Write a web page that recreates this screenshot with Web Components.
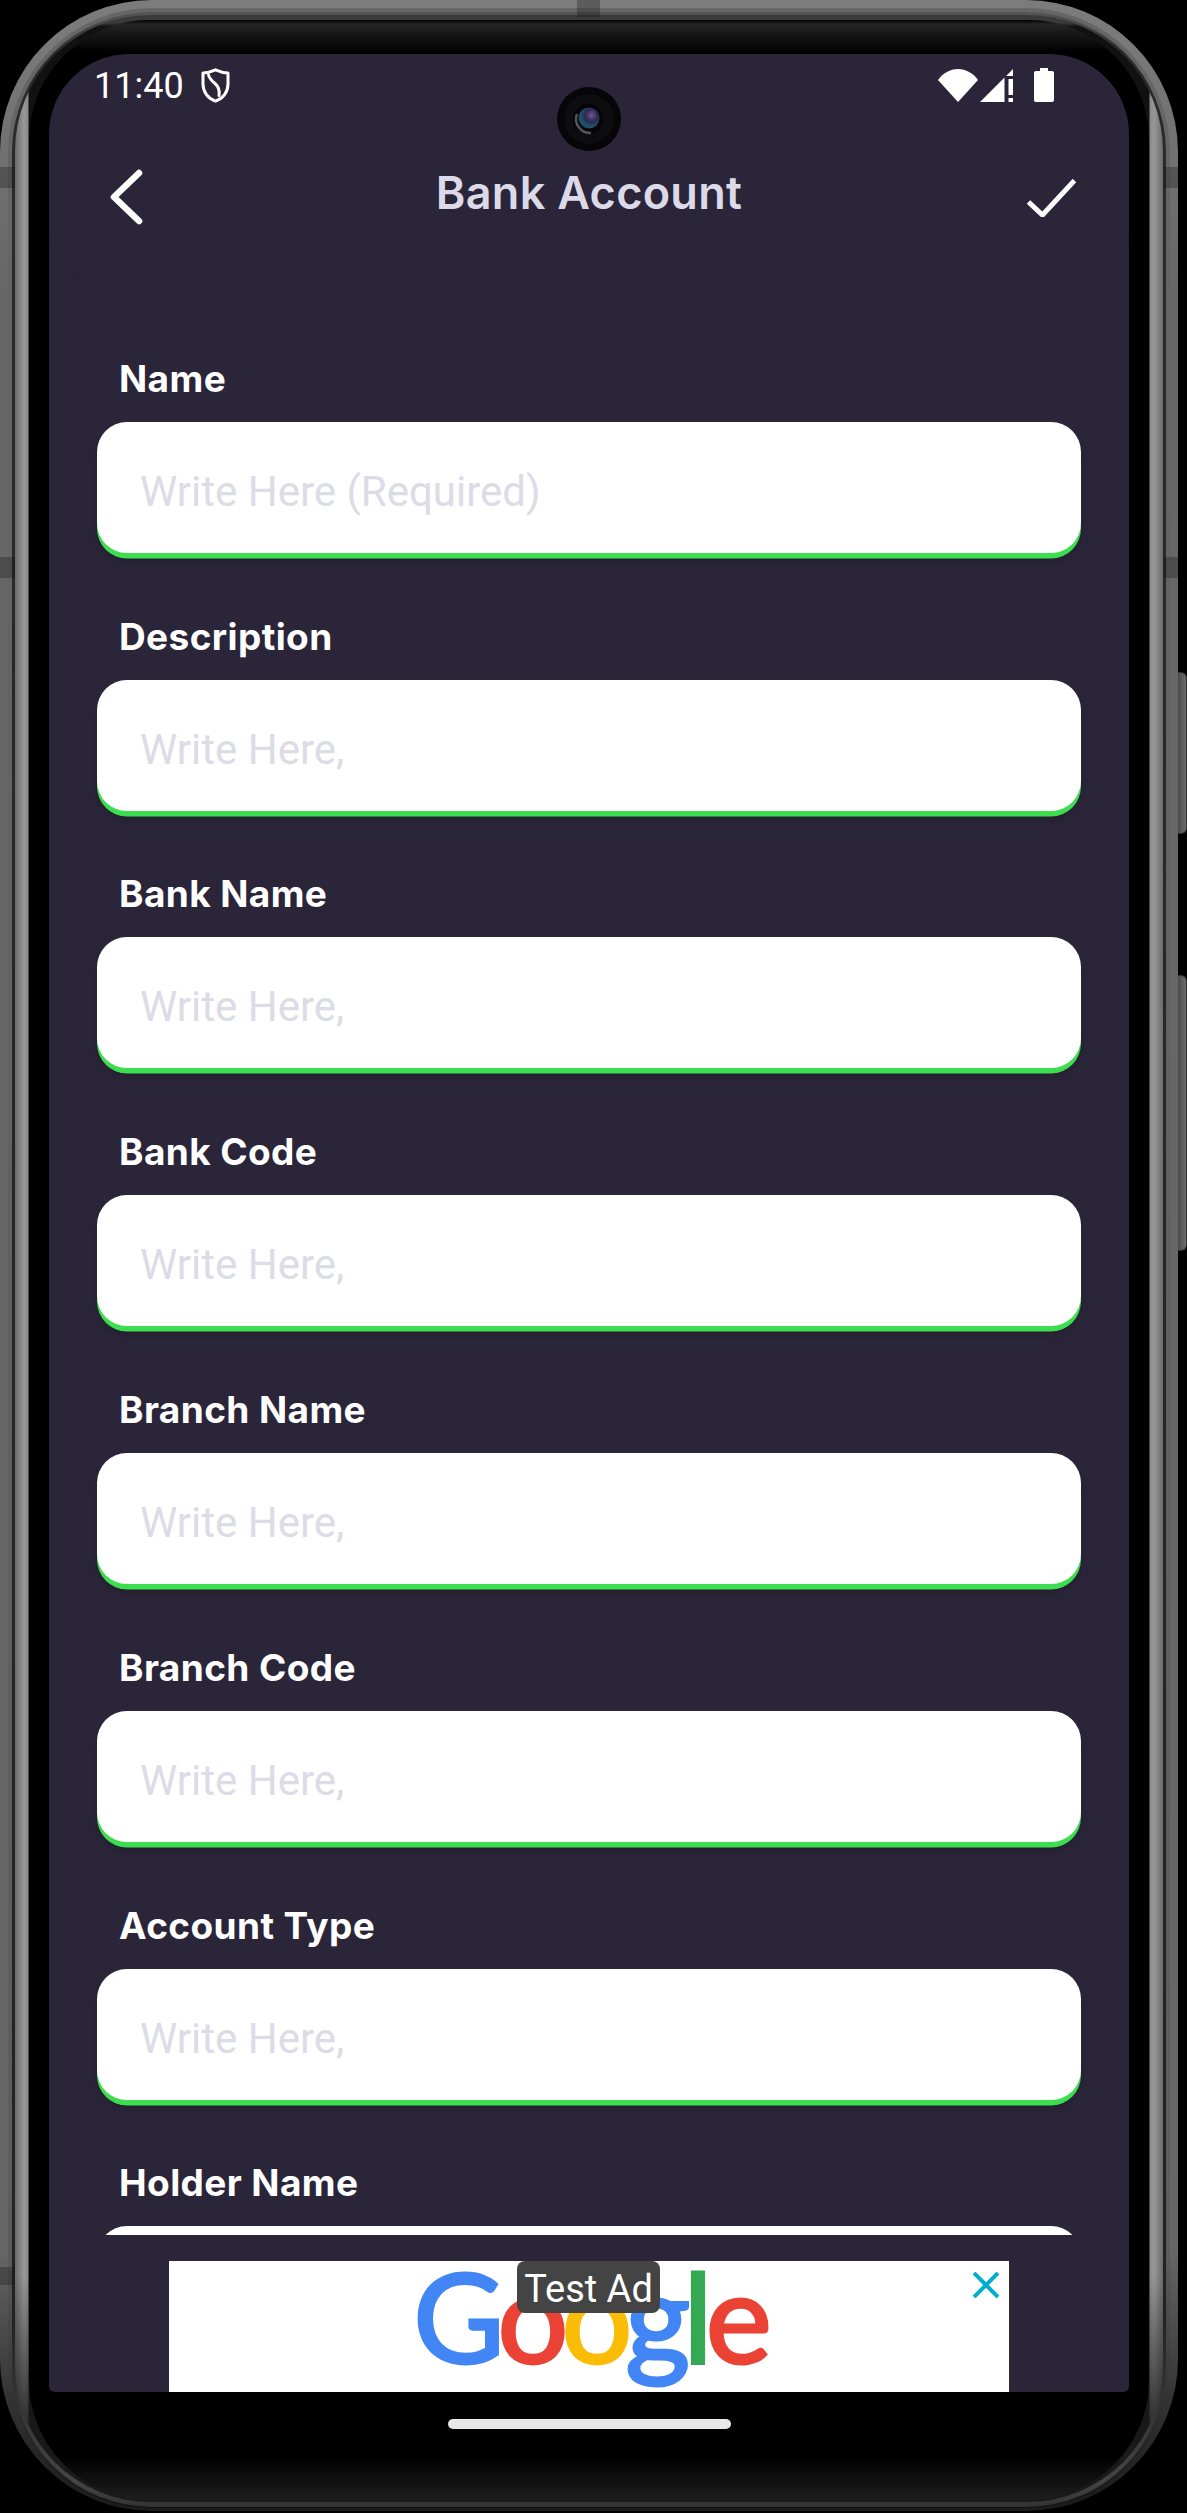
<!DOCTYPE html>
<html>
<head>
<meta charset="utf-8">
<title>Bank Account</title>
<style>
	html, body { margin: 0; background: #000; }
	body { width: 1187px; height: 2513px; overflow: hidden; font-family: Roboto, sans-serif; }
</style>
</head>
<body>
<phone-frame>
	<status-bar></status-bar>
	<app-header>Bank Account</app-header>
	<bank-form>
		<form-field><span slot="label">Name</span><span slot="hint">Write Here (Required)</span></form-field>
		<form-field><span slot="label">Description</span><span slot="hint">Write Here,</span></form-field>
		<form-field><span slot="label">Bank Name</span><span slot="hint">Write Here,</span></form-field>
		<form-field><span slot="label">Bank Code</span><span slot="hint">Write Here,</span></form-field>
		<form-field><span slot="label">Branch Name</span><span slot="hint">Write Here,</span></form-field>
		<form-field><span slot="label">Branch Code</span><span slot="hint">Write Here,</span></form-field>
		<form-field><span slot="label">Account Type</span><span slot="hint">Write Here,</span></form-field>
		<form-field><span slot="label">Holder Name</span></form-field>
	</bank-form>
	<test-ad></test-ad>
</phone-frame>

<script>
/*
Device body: metal rim, bezel and screen
*/
const templatePhone = document.createElement('template');
templatePhone.innerHTML = `
	<style>
		:host {
			display: block;
			position: relative;
			width: 1187px;
			height: 2511px;
		}
		.rim-outer {
			width: 1178px;
			height: 2511px;
			box-sizing: border-box;
			padding: 8px 8px 3px;
			border-radius: 152px;
			background: linear-gradient(#7c7c7c 0, #666 300px, #666 2250px, #333 2400px, #1c1c1c 2500px);
		}
		.rim-line {
			height: 100%;
			box-sizing: border-box;
			padding: 4px 4px 1px;
			border-radius: 144px;
			background: linear-gradient(#666, #5c5c5c 2250px, #2a2a2a 2420px, #111);
		}
		.rim-dark {
			height: 100%;
			box-sizing: border-box;
			padding: 3px 3px 5px;
			border-radius: 140px;
			background: linear-gradient(#555, #2a2a2a 40px, #222 2300px, #444 2470px, #333);
		}
		.rim-inner {
			height: 100%;
			box-sizing: border-box;
			padding: 5px 14px 2px;
			border-radius: 136px;
			background:
				linear-gradient(#3a3a3a, #3a3a3a 8px, transparent 12px, transparent 2260px, #1a1a1a 2440px),
				linear-gradient(90deg, #6b6b6b, #989898 9px, #8a8a8a 13px, #111 14px, #111 1134px, #8a8a8a 1135px, #989898 1139px, #6b6b6b);
		}
		.bezel {
			height: 100%;
			box-sizing: border-box;
			padding: 34px 20px 0;
			border-radius: 120px;
			background: linear-gradient(#000 0, #242424 4px, #000 32px, #000 2436px, #1c1c1c 2478px);
		}
		.screen {
			position: relative;
			display: flex;
			flex-direction: column;
			height: 2338px;
			border-radius: 80px 80px 6px 6px;
			background: #2a2538;
			overflow: hidden;
		}
		.camera {
			position: absolute;
			left: 508px;
			top: 33px;
			display: block;
		}
		.home-bar {
			width: 283px;
			height: 10px;
			margin: 27px auto 0;
			border-radius: 5px;
			background: #e8e8e8;
		}
		.notch {
			position: absolute;
			background: rgba(20, 20, 20, .3);
		}
		.n1 { left: 0; top: 167px; width: 15px; height: 21px; }
		.n2 { left: 0; top: 557px; width: 15px; height: 21px; }
		.n3 { left: 0; top: 2267px; width: 15px; height: 18px; }
		.n4 { left: 1163px; top: 167px; width: 15px; height: 21px; }
		.n5 { left: 1163px; top: 557px; width: 15px; height: 21px; }
		.n6 { left: 577px; top: 0; width: 23px; height: 17px; }
		.key {
			position: absolute;
			left: 1178px;
			width: 9px;
			box-sizing: border-box;
			border: 1px solid #333;
			border-left: 0;
			border-radius: 0 6px 6px 0;
			background: linear-gradient(90deg, #4a4a4a, #6e6e6e);
		}
		.k1 { top: 672px; height: 162px; }
		.k2 { top: 975px; height: 276px; }
	</style>
	<div class="rim-outer"><div class="rim-line"><div class="rim-dark"><div class="rim-inner"><div class="bezel">
		<div class="screen">
			<slot></slot>
			<svg class="camera" width="64" height="64" viewBox="0 0 64 64">
				<defs>
					<radialGradient id="lens" cx="62%" cy="38%" r="75%">
						<stop offset="0" stop-color="#6f5a8c"/>
						<stop offset=".4" stop-color="#2b2a52"/>
						<stop offset=".75" stop-color="#1f5570"/>
						<stop offset="1" stop-color="#0e2a3a"/>
					</radialGradient>
				</defs>
				<circle cx="32" cy="32" r="32" fill="#060608"/>
				<circle cx="32" cy="32" r="25" fill="#0d0d0f"/>
				<circle cx="31" cy="32" r="15" fill="#050505"/>
				<path d="M20 27a14 14 0 0 0 14 19" fill="none" stroke="#55565a" stroke-width="2.500"/>
				<circle cx="32" cy="31" r="10.500" fill="url(#lens)"/>
			</svg>
		</div>
		<div class="home-bar"></div>
	</div></div></div></div></div>
	<div class="notch n1"></div><div class="notch n2"></div><div class="notch n3"></div>
	<div class="notch n4"></div><div class="notch n5"></div><div class="notch n6"></div>
	<div class="key k1"></div><div class="key k2"></div>
`;
class PhoneFrame extends HTMLElement {
	constructor() {
		super();
		this.attachShadow({ mode: 'open' });
		this.shadowRoot.appendChild(templatePhone.content.cloneNode(true));
	}
}
customElements.define('phone-frame', PhoneFrame);

/*
Android status bar
*/
const templateStatus = document.createElement('template');
templateStatus.innerHTML = `
	<style>
		:host {
			display: flex;
			align-items: center;
			flex: none;
			height: 62px;
			padding: 0 75px 0 45px;
			color: #fff;
			font: 400 36px Roboto, sans-serif;
		}
		.time { margin: 2px 17px 0 0; }
		.right {
			margin-left: auto;
			display: flex;
			align-items: center;
			gap: 2px;
		}
		svg { display: block; fill: #fff; }
		.shield { fill: none; stroke: #fff; stroke-width: 3; stroke-linejoin: round; stroke-linecap: round; }
		.battery { margin-left: 18px; }
	</style>
	<span class="time">11:40</span>
	<svg class="shield" width="29" height="35" viewBox="0 0 29 35">
		<path d="M14.500 1.800C10.500 3.600 6.500 4.800 2 5v11c0 8 5 14.600 12.500 17.200C22 30.600 27 24 27 16V5c-4.500-.2-8.500-1.400-12.500-3.200z"/>
		<path d="M7.500 7c1 4 3.500 6 6.500 8.500 3.500 3 5 6 4 12"/>
	</svg>
	<div class="right">
		<svg width="40" height="33" viewBox="0 0 40 33"><path d="M0 11C5 4 12 0 20 0s15 4 20 11L20 33z"/></svg>
		<svg width="34" height="33" viewBox="0 0 34 33">
			<path d="M0 33L24.500 8.500V33z"/>
			<path d="M33 0v7h-7zM28.500 10H33v16h-4.500zM28.500 29H33v4h-4.500z"/>
		</svg>
		<svg class="battery" width="20" height="34" viewBox="0 0 20 34"><path d="M6 0h8v3h4c1.200 0 2 .8 2 2v27c0 1.200-.8 2-2 2H2c-1.200 0-2-.8-2-2V5c0-1.200.8-2 2-2h4z"/></svg>
	</div>
`;
class StatusBar extends HTMLElement {
	constructor() {
		super();
		this.attachShadow({ mode: 'open' });
		this.shadowRoot.appendChild(templateStatus.content.cloneNode(true));
	}
}
customElements.define('status-bar', StatusBar);

/*
Title row with back and save buttons
*/
const templateHeader = document.createElement('template');
templateHeader.innerHTML = `
	<style>
		:host {
			display: grid;
			grid-template-columns: 1fr auto 1fr;
			align-items: center;
			height: 161px;
			padding: 0 53px;
			flex: none;
			box-sizing: border-box;
			border-radius: 0 0 50px 50px;
			box-shadow: 0 2px 5px rgba(0, 0, 0, .06);
		}
		.title {
			font: 600 45px Inter, sans-serif;
			letter-spacing: .3px;
			color: #dcd9e8;
			margin-top: -9px;
		}
		svg { display: block; fill: none; stroke: #fff; }
		.back { margin-left: 8px; stroke-linecap: round; stroke-linejoin: round; }
		.save { justify-self: end; margin-top: 3px; }
	</style>
	<svg class="back" width="34" height="56" viewBox="0 0 34 56" stroke-width="6.500"><path d="M29 4L4 28l25 24"/></svg>
	<div class="title"><slot></slot></div>
	<svg class="save" width="49" height="38" viewBox="0 0 49 38" stroke-width="5"><path d="M1.500 23l14 13L47.500 1.500"/></svg>
`;
class AppHeader extends HTMLElement {
	constructor() {
		super();
		this.attachShadow({ mode: 'open' });
		this.shadowRoot.appendChild(templateHeader.content.cloneNode(true));
	}
}
customElements.define('app-header', AppHeader);

/*
Scrolling form, clipped above the ad
*/
const templateForm = document.createElement('template');
templateForm.innerHTML = `
	<style>
		:host {
			display: block;
			height: 1958px;
			flex: none;
			box-sizing: border-box;
			padding: 18px 48px 0;
			overflow: hidden;
		}
	</style>
	<slot></slot>
`;
class BankForm extends HTMLElement {
	constructor() {
		super();
		this.attachShadow({ mode: 'open' });
		this.shadowRoot.appendChild(templateForm.content.cloneNode(true));
	}
}
customElements.define('bank-form', BankForm);

const templateField = document.createElement('template');
templateField.innerHTML = `
	<style>
		:host {
			display: block;
			height: 257.800px;
			padding-top: 61.800px;
			box-sizing: border-box;
		}
		.label {
			height: 65px;
			padding-left: 22px;
			color: #fff;
			font: 700 37px/44px Inter, sans-serif;
			letter-spacing: .4px;
		}
		.box {
			display: flex;
			align-items: center;
			height: 131px;
			padding: 8px 0 0 43px;
			box-sizing: border-box;
			border-radius: 30px;
			background: #fff;
			box-shadow: 0 5.500px 0 #3ddd50, 0 9px 8px rgba(0, 0, 0, .15);
			color: #dcdce6;
			font: 400 42px Roboto, sans-serif;
		}
	</style>
	<div class="label"><slot name="label"></slot></div>
	<div class="box"><slot name="hint"></slot></div>
`;
class FormField extends HTMLElement {
	constructor() {
		super();
		this.attachShadow({ mode: 'open' });
		this.shadowRoot.appendChild(templateField.content.cloneNode(true));
	}
}
customElements.define('form-field', FormField);

/*
Banner at the bottom of the screen
*/
const templateAd = document.createElement('template');
templateAd.innerHTML = `
	<style>
		:host {
			display: block;
			position: relative;
			width: 840px;
			height: 131px;
			margin: 26px auto 0;
			flex: none;
			background: #fff;
		}
		.logo {
			display: flex;
			justify-content: center;
			height: 100%;
			font: 400 125px/109px Lato, sans-serif;
			letter-spacing: -7px;
			-webkit-text-stroke: 3px currentColor;
		}
		.tag {
			position: absolute;
			left: 348px;
			top: 0;
			width: 143px;
			height: 52px;
			border-radius: 8px;
			background: #444;
			color: #fff;
			font: 400 38px/56px Roboto, sans-serif;
			text-align: center;
		}
		.close {
			position: absolute;
			right: 10px;
			top: 11px;
			display: block;
			fill: none;
			stroke: #00aecd;
			stroke-width: 4;
		}
	</style>
	<div class="logo">
		<span style="color:#4285f4">G</span><span style="color:#ea4335">o</span><span style="color:#fbbc05">o</span><span style="color:#4285f4">g</span><span style="color:#34a853">l</span><span style="color:#ea4335">e</span>
	</div>
	<div class="tag">Test Ad</div>
	<svg class="close" width="26" height="26" viewBox="0 0 26 26"><path d="M1 1l24 24M25 1L1 25"/></svg>
`;
class TestAd extends HTMLElement {
	constructor() {
		super();
		this.attachShadow({ mode: 'open' });
		this.shadowRoot.appendChild(templateAd.content.cloneNode(true));
	}
}
customElements.define('test-ad', TestAd);
</script>
</body>
</html>
